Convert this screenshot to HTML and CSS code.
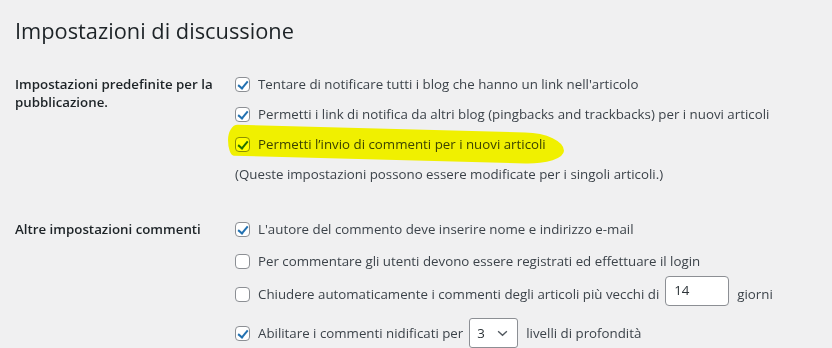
FILE: index.html
```html
<!DOCTYPE html>
<html lang="it">
<head>
<meta charset="utf-8">
<title>Impostazioni di discussione</title>
<link rel="stylesheet" href="styles.css">
</head>
<body>
<div class="wrap">
  <h1 class="title">Impostazioni di discussione</h1>

  <div class="section s1">
    <div class="th">Impostazioni predefinite per la pubblicazione.</div>
    <div class="td">
      <div class="opt r1"><span class="cb on"></span><span>Tentare di notificare tutti i blog che hanno un link nell'articolo</span></div>
      <div class="opt r2"><span class="cb on"></span><span>Permetti i link di notifica da altri blog (pingbacks and trackbacks) per i nuovi articoli</span></div>
      <div class="opt r3 marked"><span class="cb on"></span><span>Permetti l’invio di commenti per i nuovi articoli</span><span class="hl"></span></div>
      <div class="note">(Queste impostazioni possono essere modificate per i singoli articoli.)</div>
    </div>
  </div>

  <div class="section s2">
    <div class="th">Altre impostazioni commenti</div>
    <div class="td">
      <div class="opt q1"><span class="cb on"></span><span>L'autore del commento deve inserire nome e indirizzo e-mail</span></div>
      <div class="opt q2"><span class="cb"></span><span>Per commentare gli utenti devono essere registrati ed effettuare il login</span></div>
      <div class="opt q3"><span class="cb"></span><span>Chiudere automaticamente i commenti degli articoli più vecchi di</span><span class="num">14</span><span>giorni</span></div>
      <div class="opt q4"><span class="cb on"></span><span>Abilitare i commenti nidificati per</span><span class="sel">3<svg class="chev" viewBox="0 0 12 8" width="11" height="7"><path d="M1 1.5 L6 6 L11 1.5" fill="none" stroke="#50575e" stroke-width="1.6"/></svg></span><span>livelli di profondità</span></div>
    </div>
  </div>
</div>
</body>
</html>
```
FILE: styles.css
```css
html, body {
  margin: 0;
  padding: 0;
  background: #f0f0f1;
}
body {
  font-family: "Open Sans", "Noto Sans", sans-serif;
  font-size: 13.3px;
  color: #3c434a;
  width: 832px;
  height: 348px;
  overflow: hidden;
}
.wrap {
  padding-left: 15px;
}
.title {
  margin: 0;
  padding-top: 16px;
  font-size: 21.8px;
  line-height: 29px;
  font-weight: 400;
  color: #1d2327;
}
.section {
  display: grid;
  grid-template-columns: 220px 1fr;
}
.s1 { margin-top: 24px; }
.s2 { margin-top: 25px; }
.th {
  font-weight: 600;
  color: #1d2327;
  line-height: 18px;
  padding-top: 6px;
  width: 205px;
}
.td {
  display: flex;
  flex-direction: column;
}
.opt {
  display: flex;
  align-items: center;
  height: 30px;
  gap: 8px;
  white-space: nowrap;
}
.cb {
  box-sizing: border-box;
  width: 15px;
  height: 15px;
  border: 1px solid #8c8f94;
  border-radius: 4px;
  background: #fff;
  flex: none;
  position: relative;
}
.cb.on::after {
  content: "";
  position: absolute;
  left: 4px;
  top: 1px;
  width: 4px;
  height: 8px;
  border: solid #2271b1;
  border-width: 0 2.5px 2.5px 0;
  transform: rotate(40deg);
}
.marked {
  position: relative;
}
.hl {
  position: absolute;
  left: -7px;
  top: 0;
  width: 336px;
  height: 31px;
  background: #ffff00;
  mix-blend-mode: multiply;
  border-radius: 10px 40px 40px 6px / 16px 18px 14px 16px;
  transform: skewY(1.5deg);
}
.note {
  height: 30px;
  line-height: 30px;
}
.q2 { margin-top: 2px; }
.q3 { margin-top: 3px; }
.q4 { margin-top: 9px; }
.num {
  box-sizing: border-box;
  width: 64px;
  height: 30px;
  margin-bottom: 6px;
  border: 1px solid #8c8f94;
  border-radius: 4px;
  background: #fff;
  padding-left: 8px;
  line-height: 26px;
  color: #2c3338;
  margin-left: -2px;
}
.sel {
  box-sizing: border-box;
  width: 49px;
  height: 30px;
  border: 1px solid #8c8f94;
  border-radius: 3px;
  background: #fff;
  padding-left: 7px;
  line-height: 28px;
  color: #2c3338;
  display: flex;
  align-items: center;
  justify-content: space-between;
  padding-right: 9px;
  margin-left: -2px;
}
```
